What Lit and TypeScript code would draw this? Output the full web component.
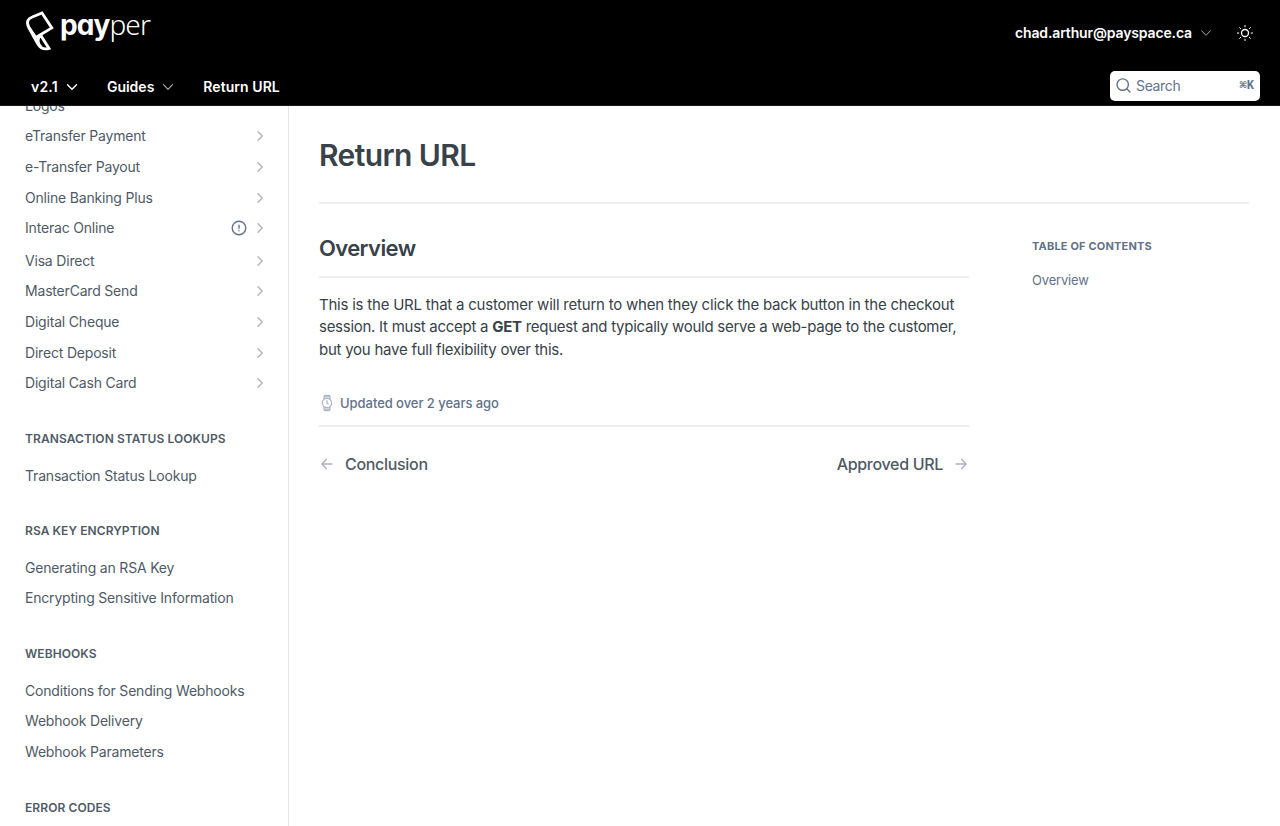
import { LitElement, html, css, svg } from "lit";
import { customElement } from "lit/decorators.js";

type Item = { label: string; more?: boolean; alert?: boolean };

const topItems: Item[] = [
  { label: "Logos" },
  { label: "eTransfer Payment", more: true },
  { label: "e-Transfer Payout", more: true },
  { label: "Online Banking Plus", more: true },
  { label: "Interac Online", more: true, alert: true },
  { label: "Visa Direct", more: true },
  { label: "MasterCard Send", more: true },
  { label: "Digital Cheque", more: true },
  { label: "Direct Deposit", more: true },
  { label: "Digital Cash Card", more: true },
];

const sections: { title: string; items: Item[] }[] = [
  { title: "Transaction Status Lookups", items: [{ label: "Transaction Status Lookup" }] },
  {
    title: "RSA Key Encryption",
    items: [{ label: "Generating an RSA Key" }, { label: "Encrypting Sensitive Information" }],
  },
  {
    title: "Webhooks",
    items: [
      { label: "Conditions for Sending Webhooks" },
      { label: "Webhook Delivery" },
      { label: "Webhook Parameters" },
    ],
  },
  { title: "Error Codes", items: [] },
];

const paths = {
  down: svg`<path d="M1.5 3.7 6 8.3l4.5-4.6"/>`,
  right: svg`<path d="M4 1.7 8.2 6 4 10.3"/>`,
};

@customElement("app-root")
export class AppRoot extends LitElement {
  static styles = css`
    :host {
      display: flex;
      flex-direction: column;
      height: 826px;
      overflow: hidden;
      background: #fff;
      color: #384248;
      font-family: Inter, "Liberation Sans", sans-serif;
      font-size: 15px;
    }
    * { box-sizing: border-box; }
    svg { display: block; flex: none; fill: none; stroke: currentColor; stroke-linecap: round; stroke-linejoin: round; }
    h1, h2, p { margin: 0; }
    header { flex: none; height: 106px; background: #000; color: #fff; border-bottom: 1px solid #1a1a1a; font-size: 14px; font-weight: 600; }
    .top { display: flex; height: 66px; align-items: center; justify-content: space-between; padding: 0 26px 0 25px; }
    .brand { display: flex; align-items: flex-start; height: 46px; }
    .logo { stroke-linejoin: miter; stroke-linecap: butt; }
    .word { font: 700 28px/34px Inter, sans-serif; font-feature-settings: "cv11"; margin: -3px 0 0 5px; letter-spacing: -0.9px; }
    .thin { font-weight: 300; font-family: "Noto Sans", sans-serif; letter-spacing: -0.9px; }
    .user { display: flex; align-items: center; }
    .mail { letter-spacing: -0.14px; padding-bottom: 2px; }
    .user-chev { margin: 0 24px 0 8px; opacity: .65; }
    .bar { display: flex; height: 39px; align-items: center; padding: 2px 20px 0 31px; }
    .version { letter-spacing: .2px; }
    .current { letter-spacing: .06px; }
    .bar .lead { margin: 0 29px 0 8px; }
    .bar .dim { opacity: .65; margin: 0 29px 0 8px; }
    .search { display: flex; align-items: center; width: 150px; height: 30px; margin: -2px 0 0 auto; padding: 0 6px; border-radius: 5px; background: #fff; color: #637288; font-weight: 400; }
    .search-label { margin-left: 5px; flex: 1; letter-spacing: -0.35px; }
    .keys { font: 700 12px "Liberation Mono", "DejaVu Sans Mono", monospace; }
    .body { display: flex; flex: 1; min-height: 0; }
    nav { width: 289px; flex: none; overflow: hidden; border-right: 1px solid #e5e5e5; color: #4f5a66; font-size: 14px; }
    .inner { margin-top: -16px; padding: 0 22px 0 25px; }
    .item { display: flex; align-items: center; height: 30.65px; letter-spacing: -0.19px; }
    .item.alert { height: 32.4px; padding-bottom: 2px; }
    .label { flex: 1; }
    .chev { color: #adb4c1; margin-top: 1px; }
    .warn { color: #637288; margin-right: 7px; }
    .title { padding: 32px 0 11.6px; line-height: 18px; font-size: 12px; font-weight: 600; letter-spacing: .08px; text-transform: uppercase; white-space: nowrap; }
    main { flex: 1; padding: 0 31px 0 30px; }
    h1 { font-size: 30px; line-height: 40px; font-weight: 600; letter-spacing: -0.6px; padding-top: 29px; border-bottom: 2px solid #efefef; height: 98px; }
    .cols { display: flex; justify-content: space-between; }
    article { width: 650px; }
    h2 { height: 74px; padding-top: 29px; border-bottom: 2px solid #efefef; font-size: 22px; line-height: 30px; font-weight: 600; letter-spacing: -0.6px; }
    .para { padding-top: 15.5px; line-height: 22.5px; white-space: nowrap; letter-spacing: -0.245px; }
    .first { letter-spacing: -0.222px; }
    .second { letter-spacing: -0.27px; }
    .updated { display: flex; align-items: center; margin-top: 32px; height: 34px; padding-bottom: 12px; border-bottom: 2px solid #efefef; color: #637288; font-size: 13px; font-weight: 500; letter-spacing: -0.05px; }
    .watch { color: #adb4c1; margin-right: 5px; }
    .pager { display: flex; justify-content: space-between; padding-top: 25px; font-size: 16px; font-weight: 500; color: #4f5a66; line-height: 24px; letter-spacing: -0.31px; }
    .link { display: flex; align-items: center; gap: 10px; }
    .arrow { color: #adb4c1; }
    aside { width: 217px; color: #637288; }
    .toc { padding-top: 35px; font-size: 11px; line-height: 14px; font-weight: 700; letter-spacing: .18px; }
    .toc-item { padding-top: 18px; font-size: 13px; line-height: 18px; letter-spacing: -0.18px; }
  `;

  private chevron(kind: "down" | "right", cls: string, size = 12, width = 1.3) {
    return html`<svg class=${cls} width=${size} height=${size} viewBox="0 0 12 12" stroke-width=${width}>${paths[kind]}</svg>`;
  }

  private row(i: Item) {
    return html`<div class="item ${i.alert ? "alert" : ""}">
      <span class="label">${i.label}</span>
      ${i.alert
        ? html`<svg class="warn" width="16" height="16" viewBox="0 0 16 16" stroke-width="1.4"><circle cx="8" cy="8" r="6.8" /><path d="M8 5.3v3M8 10.6v.1" /></svg>`
        : ""}
      ${i.more ? this.chevron("right", "chev", 12, 1.4) : ""}
    </div>`;
  }

  render() {
    return html`
      <header>
        <div class="top">
          <div class="brand">
            <svg class="logo" width="30" height="44" viewBox="0 0 30 44" stroke-width="2.8">
              <path d="M17 2.9 26.8 17.9 10.8 27.5 3.7 17C.8 11.5 3.3 8.5 7.3 7Z" />
              <path d="M3.5 17 12.3 33C15 38 18.5 40 24 38.5L15.8 25.5C11.8 28 12.3 33.5 16.7 38" />
            </svg>
            <div class="word">pay<span class="thin">per</span></div>
          </div>
          <div class="user">
            <span class="mail">chad.arthur@payspace.ca</span>
            ${this.chevron("down", "user-chev", 12, 1)}
            <svg width="18" height="18" viewBox="0 0 18 18" stroke-width="1.3">
              <circle cx="9" cy="9" r="3.5" />
              <path stroke-width="1" d="M9 1.4v1.4M9 15.2v1.4M1.4 9h1.4M15.2 9h1.4M3.6 3.6l1 1M13.4 13.4l1 1M3.6 14.4l1-1M13.4 4.6l1-1" />
            </svg>
          </div>
        </div>
        <div class="bar">
          <span class="version">v2.1</span>${this.chevron("down", "lead", 12, 1.4)}
          <span class="guides">Guides</span>${this.chevron("down", "dim", 12, 1.2)}
          <span class="current">Return URL</span>
          <div class="search">
            <svg width="15" height="15" viewBox="0 0 15 15" stroke-width="1.4"><circle cx="6.7" cy="6.6" r="5.7" /><path d="m11 11 3 3" /></svg>
            <span class="search-label">Search</span><span class="keys">⌘K</span>
          </div>
        </div>
      </header>
      <div class="body">
        <nav>
          <div class="inner">
            ${topItems.map((i) => this.row(i))}
            ${sections.map((s) => html`<div class="title"><span>${s.title}</span></div>${s.items.map((i) => this.row(i))}`)}
          </div>
        </nav>
        <main>
          <h1>Return URL</h1>
          <div class="cols">
            <article>
              <h2>Overview</h2>
              <p class="para"><span class="first">This is the URL that a customer will return to when they click the back button in the checkout</span><br /><span class="second">session. It must accept a <b>GET</b> request and typically would serve a web-page to the customer,</span><br />but you have full flexibility over this.</p>
              <div class="updated">
                <svg class="watch" width="16" height="18" viewBox="0 0 16 18" stroke-width="1.2">
                  <circle cx="8" cy="9" r="4.7" /><path d="M8 6.7V9l1.3 1M5 5.3V2.8Q5 1.3 6.3 1.3h3.4Q11 1.3 11 2.8v2.5M5 12.7v2.5q0 1.5 1.3 1.5h3.4q1.3 0 1.3-1.5v-2.5M5.2 2.8h5.6M5.2 15.2h5.6" />
                </svg>
                <span>Updated over 2 years ago</span>
              </div>
              <div class="pager">
                <div class="link"><svg class="arrow" width="16" height="16" viewBox="0 0 16 16" stroke-width="1.3"><path d="M13 8H3M7.5 3.3 2.8 8l4.7 4.7" /></svg><span>Conclusion</span></div>
                <div class="link"><span>Approved URL</span><svg class="arrow" width="16" height="16" viewBox="0 0 16 16" stroke-width="1.3"><path d="M3 8h10M8.5 3.3 13.2 8l-4.7 4.7" /></svg></div>
              </div>
            </article>
            <aside>
              <div class="toc">TABLE OF CONTENTS</div>
              <div class="toc-item">Overview</div>
            </aside>
          </div>
        </main>
      </div>
    `;
  }
}
